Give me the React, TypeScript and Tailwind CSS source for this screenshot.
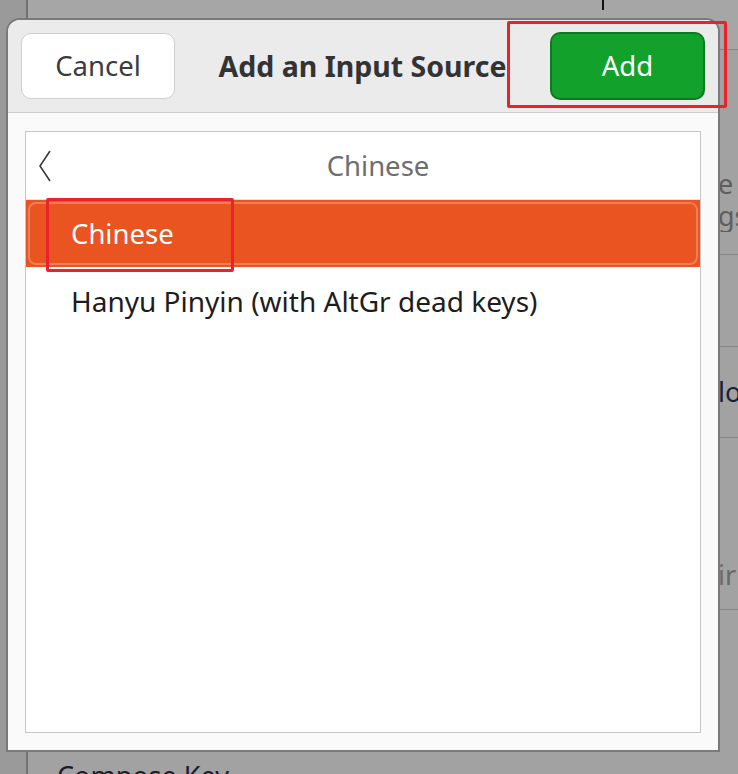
import React from "react";

const font = { fontFamily: '"Noto Sans", "Open Sans", sans-serif' };

function Row({ h, children, className = "" }: { h: string; children?: React.ReactNode; className?: string }) {
  return (
    <div className={`${h} shrink-0 bg-[#a2a2a2] border-b border-[#868686] flex justify-end ${className}`}>
      <div className="w-[20px] overflow-hidden whitespace-nowrap flex flex-col">{children}</div>
    </div>
  );
}

function BgWindow() {
  return (
    <div className="absolute left-[26px] top-0 right-0 bottom-0 bg-[#a2a2a2] border-l-2 border-[#727272] flex flex-col text-[27px]" style={font}>
      <div className="h-[50px] shrink-0 bg-[#a6a6a6] border-b border-[#868686] flex">
        <div className="ml-[574px] w-[2px] h-[10px] bg-[#111]" />
      </div>
      <Row h="h-[205px]" className="items-end pb-[22px]">
        <div className="leading-[32px] text-[#5e5e5e]">e</div>
        <div className="leading-[32px] text-[#5e5e5e]">gs</div>
      </Row>
      <Row h="h-[92px]" />
      <Row h="h-[91px]" className="items-center">
        <div className="text-[#16203a]">lo</div>
      </Row>
      <Row h="h-[172px]" className="items-end pb-[14px]">
        <div className="text-[#6a6a6a]">ir</div>
      </Row>
      <div className="flex-1 bg-[#a2a2a2] pt-[146px] pl-[29px] text-[#1c1c2a] whitespace-nowrap">Compose Key</div>
    </div>
  );
}

function Chevron() {
  return (
    <svg width="14" height="34" viewBox="0 0 14 34" className="block">
      <path d="M12 2 L2 17 L12 32" fill="none" stroke="#3a3a3a" strokeWidth="1.6" />
    </svg>
  );
}

export default function App() {
  return (
    <div className="relative w-[738px] h-[774px] overflow-hidden bg-[#9a9a9a]" style={font}>
      <BgWindow />
      <div className="absolute left-[8px] top-[20px] w-[710px] h-[730px] rounded-t-[12px] overflow-hidden flex flex-col bg-[#fafafa] ring-2 ring-[#7a7a7a]">
        <div className="h-[93px] shrink-0 bg-[#ebebeb] border-b border-[#cdcdcd] flex items-center justify-between px-[13px]">
          <button className="w-[154px] h-[66px] rounded-[10px] bg-white border border-[#cfcfcf] text-[27.5px] text-[#3c3c3c]">Cancel</button>
          <div className="text-[28.5px] font-bold text-[#333]">Add an Input Source</div>
          <button className="w-[155px] h-[68px] rounded-[10px] bg-[#12a12a] border-2 border-[#0c7a1f] text-[27.5px] text-white">Add</button>
        </div>
        <div className="flex-1 p-[17px] pt-[18px] flex">
          <div className="flex-1 bg-white border border-[#c6c6c6] flex flex-col">
            <div className="h-[68px] shrink-0 flex items-center border-b border-[#e4e4e4]">
              <div className="w-[26px] flex justify-end">
                <Chevron />
              </div>
              <div className="flex-1 text-center text-[27.5px] text-[#6e6e6e] pl-[4px]">Chinese</div>
            </div>
            <div className="h-[67px] shrink-0 bg-[#e95420] p-[2px]">
              <div className="h-full rounded-[8px] border-2 border-[#ef7d55] flex items-center pl-[41px] text-[27.5px] text-white">Chinese</div>
            </div>
            <div className="h-[68px] shrink-0 flex items-center pl-[45px] text-[28px] text-[#1d1d1d]">Hanyu Pinyin (with AltGr dead keys)</div>
          </div>
        </div>
      </div>
      <div className="absolute left-[507px] top-[21px] w-[220px] h-[87px] border-[3px] border-[#e8232b] rounded-[2px]" />
      <div className="absolute left-[46px] top-[198px] w-[188px] h-[74px] border-[3px] border-[#e8232b] rounded-[2px]" />
    </div>
  );
}
